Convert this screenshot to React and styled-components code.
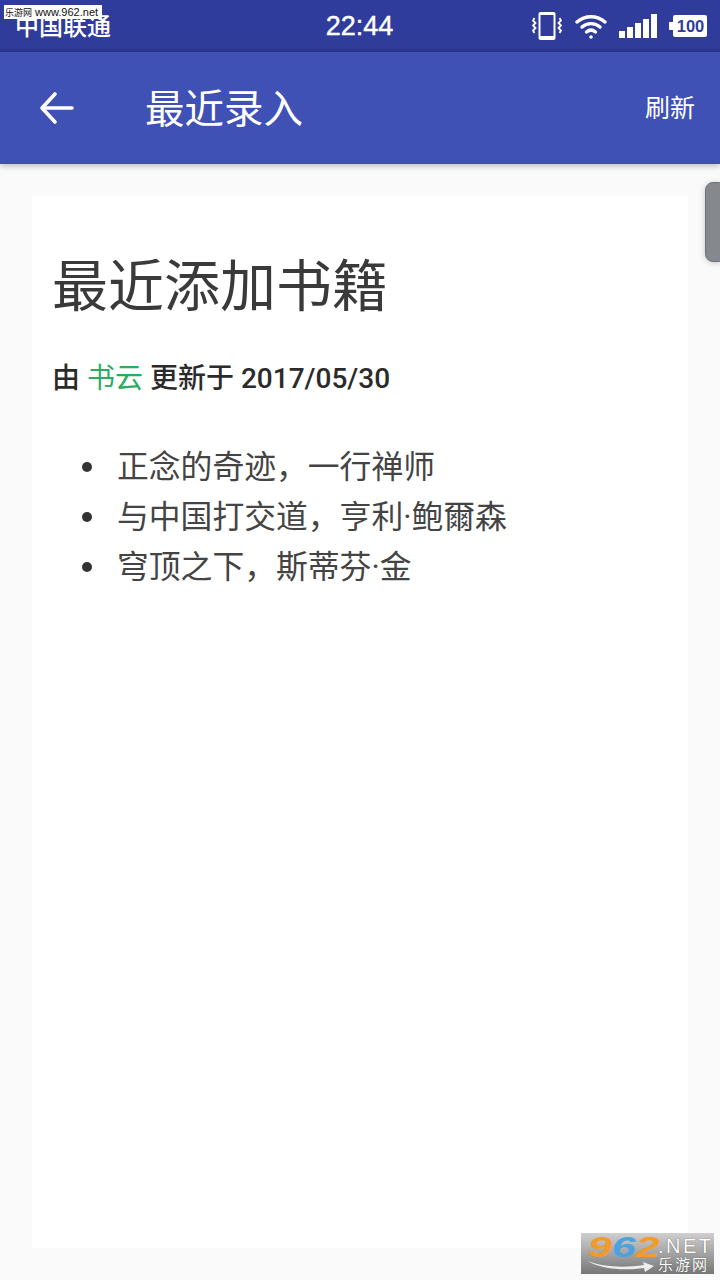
import React from 'react';
import styled, { createGlobalStyle } from 'styled-components';

const cjk = '"Roboto", "Noto Sans CJK SC", sans-serif';

const GlobalStyle = createGlobalStyle`
  html, body {
    margin: 0;
    padding: 0;
    background: #fafafa;
  }
`;

const Screen = styled.div`
  position: relative;
  width: 720px;
  height: 1280px;
  overflow: hidden;
  display: flex;
  flex-direction: column;
  background: #fafafa;
  font-family: ${cjk};
`;

const StatusBar = styled.div`
  position: relative;
  height: 52px;
  flex: none;
  background: linear-gradient(#2f3c9c, #2f3c9a 92%, #2a3588);
  color: #fff;
  display: grid;
  grid-template-columns: 1fr auto 1fr;
  align-items: center;
  padding: 0 13px 0 15px;
  box-sizing: border-box;
`;

const Carrier = styled.div`
  font-size: 24px;
  line-height: 28px;
  margin-top: 2px;
  font-weight: 500;
`;

const Clock = styled.div`
  font-family: "Liberation Sans", sans-serif;
  font-size: 27px;
  font-weight: 500;
  margin-left: -3px;
  -webkit-text-stroke: 0.4px #fff;
`;

const StatusIcons = styled.div`
  display: flex;
  justify-content: flex-end;
  align-items: center;
  gap: 12px;
`;

const AppBar = styled.header`
  position: relative;
  height: 112px;
  flex: none;
  background: #3f51b5;
  color: #fff;
  display: flex;
  align-items: center;
  padding: 0 25px 0 37px;
  box-shadow: 0 2px 6px rgba(0, 0, 0, 0.25);
`;

const BackButton = styled.div`
  width: 38px;
  height: 38px;
  margin-right: 70px;
  display: flex;
`;

const BarTitle = styled.h1`
  flex: 1;
  margin: 0 0 6px;
  font-size: 39.5px;
  font-weight: 400;
`;

const BarAction = styled.div`
  font-size: 25px;
  margin-bottom: 4px;
`;

const Content = styled.main`
  flex: 1;
  display: flex;
  padding: 32px;
`;

const Card = styled.article`
  flex: 1;
  background: #fff;
  padding: 55px 20px 0;
  color: #3a3a3a;
`;

const Heading = styled.h2`
  margin: 0;
  font-size: 56px;
  line-height: 72px;
  font-weight: 400;
`;

const Byline = styled.p`
  margin: 38px 0 0;
  font-size: 28px;
  line-height: 36px;
  font-weight: 500;
  color: #2b2b2b;
`;

const Author = styled.span`
  color: #27ae60;
  font-weight: 400;
`;

const BookList = styled.ul`
  margin: 45px 0 0;
  padding: 0 0 0 30px;
  list-style: none;
`;

const Book = styled.li`
  display: flex;
  align-items: center;
  font-size: 31.8px;
  line-height: 50px;
  height: 50px;
  color: #444;
  &::before {
    content: '';
    width: 10px;
    height: 10px;
    margin-right: 25px;
    border-radius: 50%;
    background: #333;
  }
`;

const ScrollHandle = styled.div`
  position: absolute;
  top: 182px;
  right: -6px;
  width: 21px;
  height: 80px;
  border-radius: 8px;
  background: #85888c;
  border: 1px solid #6e7175;
  box-sizing: border-box;
  box-shadow: 0 1px 6px rgba(0, 0, 0, 0.2);
`;

const Stamp = styled.div`
  position: absolute;
  top: 5px;
  left: 4px;
  width: 98px;
  height: 14px;
  padding-left: 1px;
  box-sizing: border-box;
  background: #fff;
  color: #111;
  font-size: 11px;
  line-height: 14px;
  white-space: nowrap;
  font-family: "Liberation Sans", "Noto Sans CJK SC", sans-serif;
`;

const StampName = styled.span`
  font-size: 9px;
`;

const LogoBadge = styled.div`
  position: absolute;
  left: 581px;
  top: 1233px;
  width: 133px;
  height: 41px;
  background: linear-gradient(#cfcfcf, #777);
  display: grid;
  grid-template-columns: 77px 1fr;
  font-family: "Liberation Sans", "Noto Sans CJK SC", sans-serif;
`;

const LogoLeft = styled.div`
  display: flex;
  flex-direction: column;
  padding-left: 7px;
`;

const LogoDigits = styled.div`
  font-size: 30px;
  line-height: 28px;
  height: 28px;
  font-weight: 700;
  font-style: italic;
  color: #f39a2d;
  transform: scaleX(1.43);
  transform-origin: left center;
  white-space: nowrap;
`;

const LogoBlue = styled.span`
  color: #4aa3e0;
`;

const LogoSide = styled.div`
  color: #fff;
  display: flex;
  flex-direction: column;
  padding-top: 3px;
  text-shadow: 0 0 1px #444;
`;

const LogoNet = styled.div`
  font-size: 20px;
  line-height: 20px;
  letter-spacing: 2.5px;
`;

const LogoName = styled.div`
  font-size: 15px;
  line-height: 17px;
  letter-spacing: 2px;
`;

const VibrateIcon = () => (
  <svg width="30" height="28" viewBox="0 0 30 28" fill="none" style={{ marginRight: 1 }}>
    <rect x="6.500" y="0" width="17" height="28" rx="2" fill="#fff" />
    <rect x="8.500" y="3" width="13" height="21" fill="#2f3c9c" />
    <path d="M2.500 6l-1.500 2.500 2.500 2.500-2.500 2.500 2.500 2.500-2.500 2.500 1.500 2.500M27.500 6l1.500 2.500-2.500 2.500 2.500 2.500-2.500 2.500 2.500 2.500-1.500 2.500" stroke="#fff" strokeWidth="1.800" />
  </svg>
);

const WifiIcon = () => (
  <svg width="32" height="25" viewBox="0 0 32 25" fill="none" stroke="#fff" strokeWidth="3.400" strokeLinecap="round">
    <path d="M2 8c8-7 20-7 28 0" />
    <path d="M7 13c5-4.500 13-4.500 18 0" />
    <path d="M11.500 18c3-2.500 6-2.500 9 0" />
    <circle cx="16" cy="23" r="1.800" fill="#fff" stroke="none" />
  </svg>
);

const SignalIcon = () => (
  <svg width="38" height="24" viewBox="0 0 38 24" fill="#fff">
    <rect x="0" y="17" width="6" height="7" />
    <rect x="8" y="13" width="6" height="11" />
    <rect x="16" y="9" width="6" height="15" />
    <rect x="24" y="5" width="6" height="19" />
    <rect x="32" y="0" width="6" height="24" />
  </svg>
);

const BatteryIcon = () => (
  <svg width="38" height="22" viewBox="0 0 38 22">
    <path d="M6 0h30a2 2 0 0 1 2 2v18a2 2 0 0 1-2 2H6a2 2 0 0 1-2-2v-5H0V7h4V2a2 2 0 0 1 2-2z" fill="#fff" />
    <text x="21.500" y="17" textAnchor="middle" fontSize="16.500" fontWeight="700" fontFamily="Liberation Sans" fill="#2f3c9c">100</text>
  </svg>
);

const BackArrow = () => (
  <svg width="38" height="38" viewBox="0 0 38 38" fill="none" stroke="#fff" strokeWidth="3.600" strokeLinecap="round" strokeLinejoin="round">
    <path d="M35 19H6" />
    <path d="M18 5L5 19l13 14" />
  </svg>
);

const LogoSwoosh = () => (
  <svg width="68" height="11" viewBox="0 0 68 11" fill="#eee">
    <path d="M0 0c14 6 36 7 56 4l-1-3 11 4-9 6-1-4C36 10 12 8 0 0z" />
  </svg>
);

const books = ['正念的奇迹，一行禅师', '与中国打交道，亨利·鲍爾森', '穹顶之下，斯蒂芬·金'];

const App = () => (
  <Screen>
    <GlobalStyle />
    <StatusBar>
      <Carrier>中国联通</Carrier>
      <Clock>22:44</Clock>
      <StatusIcons>
        <VibrateIcon />
        <WifiIcon />
        <SignalIcon />
        <BatteryIcon />
      </StatusIcons>
    </StatusBar>
    <AppBar>
      <BackButton><BackArrow /></BackButton>
      <BarTitle>最近录入</BarTitle>
      <BarAction>刷新</BarAction>
    </AppBar>
    <Content>
      <Card>
        <Heading>最近添加书籍</Heading>
        <Byline>由 <Author>书云</Author> 更新于 2017/05/30</Byline>
        <BookList>
          {books.map((book) => <Book key={book}>{book}</Book>)}
        </BookList>
      </Card>
    </Content>
    <ScrollHandle />
    <Stamp><StampName>乐游网</StampName> www.962.net</Stamp>
    <LogoBadge>
      <LogoLeft>
        <LogoDigits>9<LogoBlue>6</LogoBlue>2</LogoDigits>
        <LogoSwoosh />
      </LogoLeft>
      <LogoSide>
        <LogoNet>.NET</LogoNet>
        <LogoName>乐游网</LogoName>
      </LogoSide>
    </LogoBadge>
  </Screen>
);

export default App;
